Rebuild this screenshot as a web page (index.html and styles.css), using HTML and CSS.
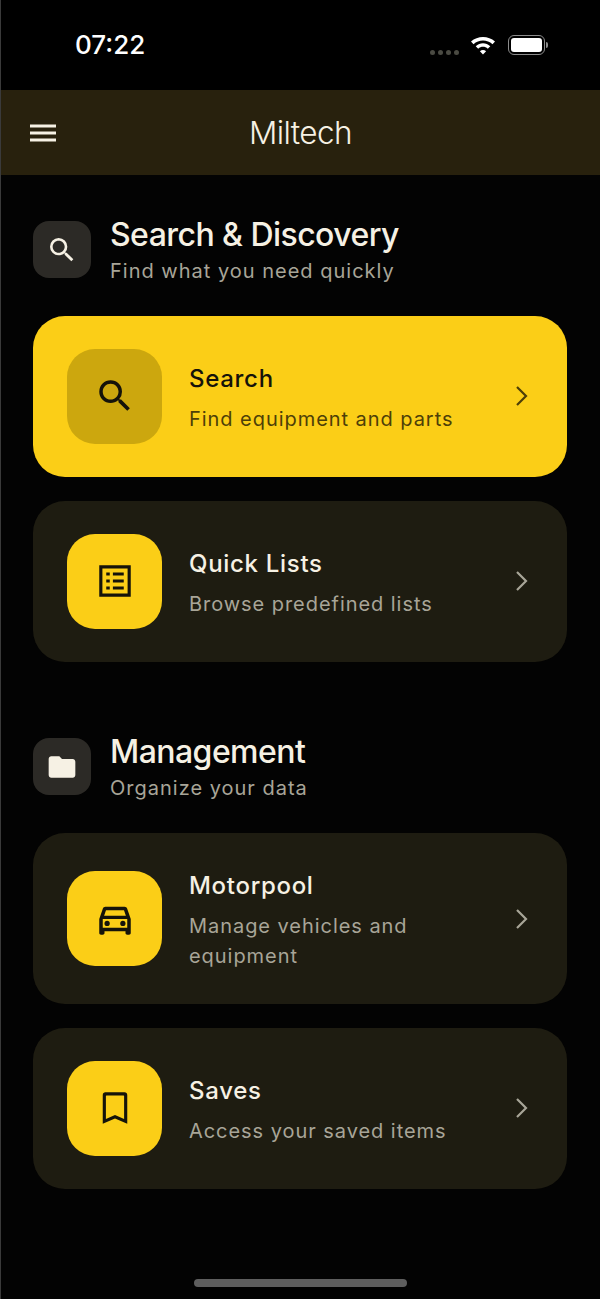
FILE: index.html
```html
<!DOCTYPE html>
<html>
  <head>
    <title>Miltech</title>
    <meta charset="UTF-8">
    <meta name="viewport" content="width=device-width, initial-scale=1.0">
    <link rel="stylesheet" href="styles.css">
  </head>
  <body>
    <div class="screen">
      <div class="status-bar">
        <span class="time">07:22</span>
        <div class="status-icons">
          <div class="signal"><i></i><i></i><i></i><i></i></div>
          <svg class="wifi" width="26" height="20" viewBox="0 0 26 20">
            <path d="M1 6.600 C7.500 .4 18.500 .4 25 6.600 L22.500 9.200 C17.200 4.200 8.800 4.200 3.500 9.200 Z" fill="#fff"/>
            <path d="M5.700 11.300 C10 7.300 16 7.300 20.300 11.300 L17.800 13.800 C15 11.200 11 11.200 8.200 13.800 Z" fill="#fff"/>
            <path d="M13 19.500 L9.900 16.200 C11.700 14.700 14.300 14.700 16.100 16.200 Z" fill="#fff"/>
          </svg>
          <div class="battery"><div class="battery-fill"></div></div>
          <div class="battery-cap"></div>
        </div>
      </div>

      <header class="app-bar">
        <svg class="menu" width="28" height="20" viewBox="0 0 28 20">
          <path d="M1 3h26M1 10h26M1 17h26" stroke="#f6f1e4" stroke-width="2.800" fill="none"/>
        </svg>
        <h1>Miltech</h1>
      </header>

      <main class="content">
        <section class="section">
          <div class="section-head">
            <div class="head-icon">
              <svg width="32" height="32" viewBox="0 0 24 24"><path d="M15.500 14h-.79l-.28-.27A6.470 6.470 0 0 0 16 9.500 6.500 6.500 0 1 0 9.500 16c1.610 0 3.090-.59 4.230-1.570l.27.28v.79l5 4.990L20.490 19l-4.990-5zm-6 0C7.010 14 5 11.990 5 9.500S7.010 5 9.500 5 14 7.010 14 9.500 11.990 14 9.500 14z" fill="#f6f1e4"/></svg>
            </div>
            <div class="head-text">
              <h2>Search &amp; Discovery</h2>
              <p>Find what you need quickly</p>
            </div>
          </div>

          <a class="card active">
            <div class="card-icon">
              <svg width="42" height="42" viewBox="0 0 24 24"><path d="M15.500 14h-.79l-.28-.27A6.470 6.470 0 0 0 16 9.500 6.500 6.500 0 1 0 9.500 16c1.610 0 3.090-.59 4.230-1.570l.27.28v.79l5 4.990L20.490 19l-4.990-5zm-6 0C7.010 14 5 11.990 5 9.500S7.010 5 9.500 5 14 7.010 14 9.500 11.990 14 9.500 14z" fill="#15130a"/></svg>
            </div>
            <div class="card-text">
              <h3>Search</h3>
              <p>Find equipment and parts</p>
            </div>
            <svg class="chevron" width="16" height="22" viewBox="0 0 16 22"><path d="M3 2l9 9-9 9" fill="none" stroke="currentColor" stroke-width="2.200"/></svg>
          </a>

          <a class="card">
            <div class="card-icon">
              <svg width="42" height="42" viewBox="0 0 24 24"><path d="M10.800 7.200h6.200v1.700h-6.200zM10.800 11.150h6.200v1.700h-6.200zM10.800 15.100h6.200v1.700h-6.200zM7 7.200h2v1.700H7zM7 11.150h2v1.700H7zM7 15.100h2v1.700H7zM3 3v18h18V3H3zM19.200 19.200H4.800V4.800h14.400v14.400z" fill="#15130a"/></svg>
            </div>
            <div class="card-text">
              <h3>Quick Lists</h3>
              <p>Browse predefined lists</p>
            </div>
            <svg class="chevron" width="16" height="22" viewBox="0 0 16 22"><path d="M3 2l9 9-9 9" fill="none" stroke="currentColor" stroke-width="2.200"/></svg>
          </a>
        </section>

        <section class="section">
          <div class="section-head">
            <div class="head-icon">
              <svg width="32" height="32" viewBox="0 0 24 24"><path d="M10 4H4c-1.100 0-2 .9-2 2v12c0 1.100.9 2 2 2h16c1.100 0 2-.9 2-2V8c0-1.100-.9-2-2-2h-8l-2-2z" fill="#f6f1e4"/></svg>
            </div>
            <div class="head-text">
              <h2>Management</h2>
              <p>Organize your data</p>
            </div>
          </div>

          <a class="card">
            <div class="card-icon">
              <svg width="42" height="42" viewBox="0 0 24 24"><path d="M18.920 6.010C18.720 5.420 18.160 5 17.500 5h-11c-.66 0-1.210.42-1.420 1.010L3 12v8c0 .55.45 1 1 1h1c.55 0 1-.45 1-1v-1h12v1c0 .55.45 1 1 1h1c.55 0 1-.45 1-1v-8l-2.080-5.990zM6.850 7h10.290l1.080 3.110H5.770L6.850 7zM19 17H5v-5h14v5z" fill="#15130a"/><circle cx="7.500" cy="14.500" r="1.500" fill="#15130a"/><circle cx="16.500" cy="14.500" r="1.500" fill="#15130a"/></svg>
            </div>
            <div class="card-text">
              <h3>Motorpool</h3>
              <p>Manage vehicles and equipment</p>
            </div>
            <svg class="chevron" width="16" height="22" viewBox="0 0 16 22"><path d="M3 2l9 9-9 9" fill="none" stroke="currentColor" stroke-width="2.200"/></svg>
          </a>

          <a class="card">
            <div class="card-icon">
              <svg width="42" height="42" viewBox="0 0 24 24"><path d="M17.500 3h-11C5.700 3 5 3.700 5 4.500V21l7-3 7 3V4.500C19 3.700 18.300 3 17.500 3zm-.3 15.300L12 16l-5.200 2.300V5.100c0-.2.1-.3.3-.3h9.800c.2 0 .3.100.3.300v13.200z" fill="#15130a"/></svg>
            </div>
            <div class="card-text">
              <h3>Saves</h3>
              <p>Access your saved items</p>
            </div>
            <svg class="chevron" width="16" height="22" viewBox="0 0 16 22"><path d="M3 2l9 9-9 9" fill="none" stroke="currentColor" stroke-width="2.200"/></svg>
          </a>
        </section>
      </main>

      <div class="home-indicator"></div>
    </div>
  </body>
</html>
```

FILE: styles.css
```css
body {
  margin: 0;
  padding: 0;
  background-color: #000;
  font-family: Inter, "Liberation Sans", sans-serif;
}
.screen {
  width: 600px;
  height: 1299px;
  box-sizing: border-box;
  display: flex;
  flex-direction: column;
  background-color: #030303;
  border-left: 1px solid #3a3a3a;
  overflow: hidden;
}

.status-bar {
  height: 90px;
  flex: none;
  display: flex;
  align-items: flex-start;
  justify-content: space-between;
  box-sizing: border-box;
  padding: 28px 52px 0 74px;
  background-color: #000;
}
.time {
  font-size: 26px;
  font-weight: 500;
  line-height: 34px;
  color: #fff;
}
.status-icons {
  display: flex;
  align-items: center;
  height: 34px;
}
.signal {
  display: flex;
  gap: 3px;
  margin-top: 14px;
  margin-right: 11px;
}
.signal i {
  width: 5px;
  height: 5px;
  border-radius: 50%;
  background-color: #4a4a42;
}
.wifi {
  margin-right: 12px;
}
.battery {
  width: 37px;
  height: 20px;
  box-sizing: border-box;
  padding: 2px;
  border: 1.5px solid #8c8c8c;
  border-radius: 6px;
}
.battery-fill {
  height: 100%;
  border-radius: 3px;
  background-color: #fff;
}
.battery-cap {
  width: 2px;
  height: 6px;
  margin-left: 1px;
  border-radius: 0 2px 2px 0;
  background-color: #8c8c8c;
}

.app-bar {
  height: 85px;
  flex: none;
  display: flex;
  align-items: center;
  justify-content: center;
  position: relative;
  background-color: #28210d;
}
.menu {
  position: absolute;
  left: 28px;
  top: 33px;
}
.app-bar h1 {
  margin: 0;
  font-size: 31.500px;
  font-weight: 300;
  letter-spacing: -0.6px;
  color: #f6f1e4;
}

.content {
  flex: 1;
  min-height: 0;
  padding: 41px 33px 0 32px;
}
.section {
  display: flex;
  flex-direction: column;
  gap: 23.600px;
  margin-bottom: 71.800px;
}
.section-head {
  display: flex;
  gap: 19px;
  align-items: center;
  margin-bottom: 6.400px;
}
.head-icon {
  width: 58px;
  height: 57px;
  flex: none;
  display: flex;
  align-items: center;
  justify-content: center;
  margin-bottom: 3px;
  border-radius: 16px;
  background-color: #2c2a26;
}
.head-text h2 {
  margin: 0;
  font-size: 32px;
  font-weight: 500;
  line-height: 38px;
  letter-spacing: -0.55px;
  color: #f6f1e4;
}
.head-text p {
  margin: 0;
  padding-top: 2px;
  font-size: 20px;
  line-height: 30px;
  letter-spacing: 1px;
  color: #a8a598;
}

.card {
  display: flex;
  align-items: center;
  box-sizing: border-box;
  min-height: 160.800px;
  padding: 33px 37px 33px 34px;
  border-radius: 32px;
  background-color: #1e1c11;
  color: #a8a598;
}
.card.active {
  background-color: #fbce17;
  color: #4d3f08;
}
.card-icon {
  width: 95px;
  height: 95px;
  flex: none;
  display: flex;
  align-items: center;
  justify-content: center;
  border-radius: 28px;
  background-color: #fbce17;
}
.active .card-icon {
  background-color: #cca70e;
}
.card-text {
  flex: 1;
  padding: 5px 40px 0 27px;
}
.card-text h3 {
  margin: 0 0 10px;
  font-size: 24px;
  font-weight: 500;
  line-height: 30px;
  letter-spacing: 0.7px;
  color: #f6f1e4;
}
.active .card-text h3 {
  color: #15130a;
}
.card-text p {
  margin: 0;
  font-size: 20px;
  line-height: 30px;
  letter-spacing: 0.95px;
}
.chevron {
  flex: none;
}

.home-indicator {
  flex: none;
  align-self: center;
  width: 213px;
  height: 8px;
  margin-bottom: 12px;
  border-radius: 4px;
  background-color: #5e5e5e;
}
```
